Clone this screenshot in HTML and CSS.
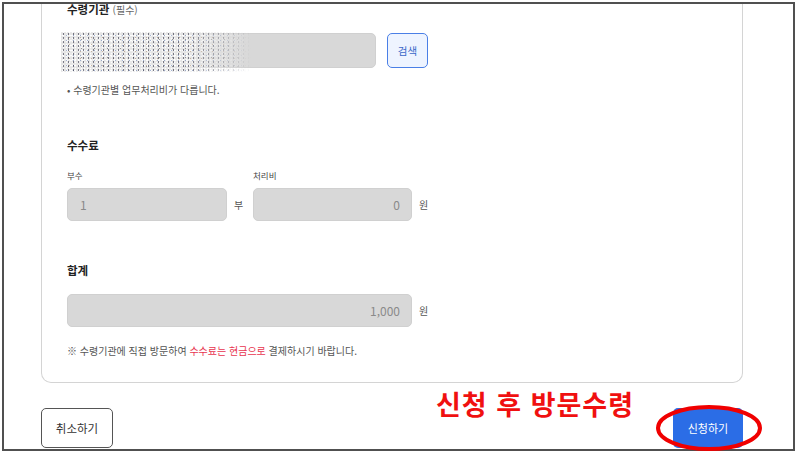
FILE: index.html
```html
<!DOCTYPE html>
<html lang="ko">
<head>
<meta charset="utf-8">
<title>수령기관 신청</title>
<link rel="stylesheet" href="styles.css">
</head>
<body>
<div class="frame">
  <section class="card">
    <div class="label">수령기관 <span class="req">(필수)</span></div>
    <div class="row first-row">
      <div class="input agency"><div class="masked"></div></div>
      <button class="search" type="button">검색</button>
    </div>
    <p class="hint">• 수령기관별 업무처리비가 다릅니다.</p>

    <h3 class="heading fee-heading">수수료</h3>
    <div class="fee-row">
      <div class="col">
        <div class="sublabel">부수</div>
        <div class="row">
          <div class="input copies">1</div>
          <span class="unit unit-copies">부</span>
        </div>
      </div>
      <div class="col">
        <div class="sublabel">처리비</div>
        <div class="row">
          <div class="input fee num">0</div>
          <span class="unit">원</span>
        </div>
      </div>
    </div>

    <h3 class="heading total-heading">합계</h3>
    <div class="row total-row">
      <div class="input total num">1,000</div>
      <span class="unit">원</span>
    </div>
    <p class="note">※ 수령기관에 직접 방문하여 <span class="red">수수료는 현금으로</span> 결제하시기 바랍니다.</p>
  </section>

  <div class="actions">
    <button class="btn cancel" type="button">취소하기</button>
    <button class="btn submit" type="button">신청하기</button>
  </div>
</div>

<div class="annot-text">신청 후 방문수령</div>
<svg class="annot-ring" width="112" height="52" viewBox="0 0 112 52">
  <ellipse cx="55" cy="24" rx="51" ry="21" fill="none" stroke="#f00000" stroke-width="4"/>
</svg>
</body>
</html>
```

FILE: styles.css
```css
* { box-sizing: border-box; }
html, body { margin: 0; padding: 0; background: #fff; }
body {
  position: relative;
  width: 796px;
  height: 453px;
  overflow: hidden;
  font-family: "Noto Sans CJK KR", "Noto Sans", sans-serif;
  color: #222;
}
.frame {
  margin: 2px 0 0 2px;
  width: 793px;
  height: 449px;
  border: 2px solid #505050;
  overflow: hidden;
  background: #fff;
}
.card {
  margin: -5px 0 0 37px;
  width: 702px;
  border: 1px solid #d4d4d4;
  border-top: none;
  border-radius: 0 0 10px 10px;
  padding: 0 25px 23px 25px;
}
.label {
  font-size: 11.5px;
  font-weight: 700;
  line-height: 20px;
  color: #222;
}
.req {
  font-size: 10px;
  font-weight: 400;
  color: #666;
}
.row {
  display: flex;
  align-items: center;
}
.first-row { margin-top: 13px; }
.input {
  position: relative;
  height: 33px;
  background: #d8d8d8;
  border: 1px solid #d0d0d0;
  border-radius: 5px;
  font-size: 12px;
  line-height: 31px;
  color: #8a8a8a;
  padding: 0 12px;
}
.num { text-align: right; padding-right: 11px; }
.agency { width: 309px; height: 35px; }
.masked {
  position: absolute;
  left: -7px;
  top: -2px;
  width: 190px;
  height: 40px;
  background:
    radial-gradient(circle, rgba(40,40,60,.6) 0.5px, transparent 1px) 0 0 / 5px 4px,
    radial-gradient(circle, rgba(90,120,180,.55) 0.5px, transparent 1px) 2px 1px / 7px 5px,
    radial-gradient(circle, rgba(160,120,80,.5) 0.5px, transparent 1px) 3px 2px / 11px 7px,
    radial-gradient(circle, rgba(70,70,70,.5) 0.6px, transparent 1px) 1px 3px / 13px 9px,
    radial-gradient(circle, rgba(255,255,255,.95) 0.7px, transparent 1.1px) 1px 2px / 3px 3px,
    radial-gradient(circle, rgba(255,255,255,.9) 0.8px, transparent 1.2px) 0 1px / 4px 5px,
    #e4e4e4;
  -webkit-mask-image: linear-gradient(90deg, #000 65%, transparent 100%);
  mask-image: linear-gradient(90deg, #000 65%, transparent 100%);
}
.search {
  margin-left: 11px;
  width: 41px;
  height: 35px;
  border: 1px solid #4a7fe6;
  background: #eef4ff;
  border-radius: 5px;
  color: #3a68c8;
  font-family: inherit;
  font-size: 10.5px;
  padding: 0;
}
.hint {
  margin: 14px 0 0;
  font-size: 10px;
  line-height: 16px;
  color: #555;
}
.heading {
  margin: 0;
  font-size: 11.5px;
  font-weight: 700;
  line-height: 18px;
  color: #222;
}
.fee-heading { margin-top: 38px; }
.fee-row {
  display: flex;
  margin-top: 14px;
}
.sublabel {
  font-size: 8.5px;
  line-height: 14px;
  color: #444;
  margin-bottom: 6px;
}
.copies { width: 160px; }
.unit {
  font-size: 10px;
  color: #555;
  margin-left: 7px;
}
.unit-copies { width: 19px; margin-left: 7px; }
.fee { width: 159px; }
.total-heading { margin-top: 40px; }
.total-row { margin-top: 15px; }
.total { width: 345px; }
.note {
  margin: 16px 0 0;
  font-size: 10px;
  line-height: 16px;
  color: #555;
}
.red { color: #e8354f; }
.actions {
  display: flex;
  justify-content: space-between;
  margin: 25px 0 0 37px;
  width: 702px;
}
.btn {
  height: 40px;
  border-radius: 5px;
  font-family: inherit;
  padding: 0;
}
.cancel {
  width: 72px;
  border: 1px solid #555;
  background: #fff;
  color: #333;
  font-size: 11.5px;
}
.submit {
  width: 70px;
  border: none;
  background: #2b6de6;
  color: #fff;
  font-size: 11px;
}
.annot-text {
  position: absolute;
  left: 436px;
  top: 389px;
  font-size: 27px;
  font-weight: 700;
  line-height: 30px;
  letter-spacing: 1px;
  color: #f01010;
  white-space: nowrap;
}
.annot-ring {
  position: absolute;
  left: 654px;
  top: 404px;
}
```
